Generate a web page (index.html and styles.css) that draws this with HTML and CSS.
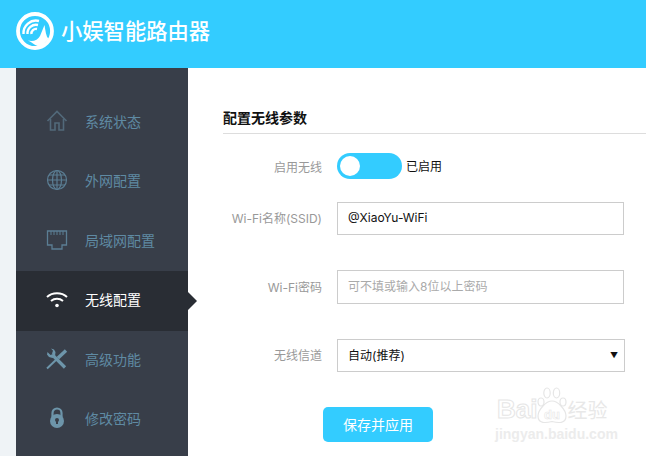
FILE: index.html
```html
<!DOCTYPE html>
<html lang="zh-CN">
<head>
    <meta charset="UTF-8">
    <title>小娱智能路由器</title>
    <link rel="stylesheet" href="styles.css">
</head>
<body>
    <header class="top">
        <svg class="logo" width="40" height="40" viewBox="0 0 40 40">
            <circle cx="20" cy="20" r="17" fill="none" stroke="#fff" stroke-width="3.8"/>
            <g fill="none" stroke="#fff" stroke-width="2.400">
                <path d="M8.500 23 A12.500 12.500 0 0 1 24 10"/>
                <path d="M12.500 23 A8.500 8.500 0 0 1 23 14"/>
                <path d="M16.500 23 A4.500 4.500 0 0 1 22 18"/>
            </g>
            <path d="M13 29.500 C18 31 23 29 25 25 L29.500 14 C30.500 20 31 25 33.500 28 L26 36 C20 35 17 31 13 29.500Z" fill="#fff"/>
        </svg>
        <span class="brand">小娱智能路由器</span>
    </header>

    <div class="wrap">
        <ul class="nav">
            <li>
                <svg width="24" height="24" viewBox="0 0 24 24" fill="none" stroke="#52697a" stroke-width="1.600">
                    <path d="M2.500 12 L12 2.500 L21.500 12"/>
                    <path d="M5.500 10 V21 H10 V14 H14 V21 H18.500 V10"/>
                </svg>
                <span>系统状态</span>
            </li>
            <li>
                <svg width="24" height="24" viewBox="0 0 24 24" fill="none" stroke="#5b7e94" stroke-width="1.200">
                    <circle cx="12" cy="12" r="9.500"/>
                    <ellipse cx="12" cy="12" rx="4.500" ry="9.500"/>
                    <path d="M12 2.500 V21.500 M2.500 12 H21.500 M4 7 H20 M4 17 H20"/>
                </svg>
                <span>外网配置</span>
            </li>
            <li>
                <svg width="24" height="24" viewBox="0 0 24 24" fill="none" stroke="#5b7e94" stroke-width="1.300">
                    <path d="M2.500 3 H21.500 V17 H17 V21 H7 V17 H2.500Z"/>
                    <path d="M6 3 V7 M9 3 V7 M12 3 V7 M15 3 V7 M18 3 V7" stroke-width="1"/>
                </svg>
                <span>局域网配置</span>
            </li>
            <li class="active">
                <svg width="24" height="24" viewBox="0 0 24 24" fill="none" stroke="#fff" stroke-width="2">
                    <path d="M2 10 C7.500 5 16.500 5 22 10"/>
                    <path d="M6 14 C9.500 11 14.500 11 18 14"/>
                    <circle cx="12" cy="18.500" r="1.800" fill="#fff" stroke="none"/>
                </svg>
                <span>无线配置</span>
            </li>
            <li>
                <svg width="24" height="24" viewBox="0 0 24 24" fill="none" stroke="#6d95aa">
                    <path d="M2 21.500 L13 11" stroke-width="2"/>
                    <path d="M13 11 L21 3.500" stroke-width="3.400"/>
                    <path d="M8.500 9 L20 20.500" stroke-width="3.200"/>
                    <path d="M2.500 5 L5.500 8 L8 7 L10 9.500 L7.500 11 L4 10 L2 7.500Z M6 1.500 L9 2.500 L10.500 5 L10 9.500 L7 6.500 L8 3.800Z" fill="#6d95aa" stroke="none"/>
                </svg>
                <span>高级功能</span>
            </li>
            <li>
                <svg width="24" height="24" viewBox="0 0 24 24">
                    <path d="M7.500 11 V7 A4.500 4.500 0 0 1 16.500 7 V11" fill="none" stroke="#6d95aa" stroke-width="2.200"/>
                    <circle cx="12" cy="15" r="7" fill="#6d95aa"/>
                    <circle cx="12" cy="14" r="2" fill="#383e49"/>
                    <path d="M11 14.500 H13 V18 H11Z" fill="#383e49"/>
                </svg>
                <span>修改密码</span>
            </li>
        </ul>

        <main class="main">
            <h2 class="title">配置无线参数</h2>

            <div class="row row-switch">
                <label>启用无线</label>
                <div class="switch"><i></i></div>
                <span class="state">已启用</span>
            </div>
            <div class="row row-ssid">
                <label>Wi-Fi名称(SSID)</label>
                <div class="field">@XiaoYu-WiFi</div>
            </div>
            <div class="row row-pwd">
                <label>Wi-Fi密码</label>
                <div class="field holder">可不填或输入8位以上密码</div>
            </div>
            <div class="row row-channel">
                <label>无线信道</label>
                <div class="field select">自动(推荐)<b>▼</b></div>
            </div>
            <div class="actions">
                <button class="save">保存并应用</button>
            </div>
        </main>
    </div>

    <div class="mark">
        <div class="mark-top">
            <span class="mark-bai">Bai</span>
            <svg width="30" height="37" viewBox="0 0 30 37" fill="none" stroke="#e6e6e6" stroke-width="1.200">
                <ellipse cx="4" cy="15" rx="3" ry="4"/>
                <ellipse cx="10" cy="6" rx="3.200" ry="5"/>
                <ellipse cx="19.500" cy="6" rx="3.200" ry="5"/>
                <ellipse cx="26" cy="15" rx="3" ry="4"/>
                <path d="M15 14 C9 14 1 23 1 29 C1 37 9 36 15 34.500 C21 36 29 37 29 29 C29 23 21 14 15 14Z"/>
                <text class="mark-du" x="15" y="32" text-anchor="middle">du</text>
            </svg>
            <span class="mark-cn">经验</span>
        </div>
        <div class="mark-url">jingyan.baidu.com</div>
    </div>
</body>
</html>
```

FILE: styles.css
```css
* {
    box-sizing: border-box;
}
html, body {
    margin: 0;
    height: 100%;
    overflow: hidden;
}
body {
    position: relative;
    background: #fff;
    font-family: "Inter", "Noto Sans CJK SC", sans-serif;
    font-size: 12px;
}
.top {
    height: 68px;
    background: #33ccff;
    display: flex;
    align-items: center;
    padding: 0 0 6px 15px;
}
.brand {
    margin-left: 6px;
    color: #fff;
    font-size: 21.3px;
    line-height: 28px;
    font-weight: 500;
}
.wrap {
    display: flex;
    height: 388px;
    background: #eff3f6;
    padding-left: 16px;
}
.nav {
    list-style: none;
    margin: 0;
    padding: 24px 0 0;
    width: 172px;
    flex: none;
    background: #383e49;
}
.nav li {
    position: relative;
    display: flex;
    align-items: center;
    height: 59.5px;
    padding: 0 0 2px 29px;
    color: #5f8aa3;
    font-size: 14px;
}
.nav li span {
    margin-left: 16px;
}
.nav li.active {
    height: 60px;
    margin-bottom: -0.5px;
    padding-bottom: 3px;
    background: #292d34;
    color: #fff;
}
.nav li.active:after {
    content: '';
    position: absolute;
    right: -9px;
    top: 50%;
    margin-top: -9px;
    border-left: 9px solid #292d34;
    border-top: 9px solid transparent;
    border-bottom: 9px solid transparent;
}
.main {
    flex: 1;
    background: #fff;
    padding: 40px 0 0 35px;
}
.title {
    margin: 0;
    height: 26px;
    line-height: 20px;
    font-size: 14px;
    font-weight: 700;
    color: #111;
    border-bottom: 1px solid #ddd;
}
.row {
    display: flex;
    align-items: center;
}
.row label {
    width: 99px;
    flex: none;
    text-align: right;
    color: #999;
    margin-right: 15px;
    padding-bottom: 2px;
    white-space: nowrap;
}
.row-switch label {
    padding-bottom: 0;
}
.row-switch {
    margin-top: 19px;
    height: 26px;
}
.row-ssid {
    margin-top: 23px;
}
.row-pwd {
    margin-top: 35px;
}
.row-channel {
    margin-top: 35px;
}
.switch {
    width: 65px;
    height: 26px;
    border-radius: 13px;
    background: #33ccff;
    padding: 3px;
}
.switch i {
    display: block;
    width: 20px;
    height: 20px;
    border-radius: 50%;
    background: #fff;
}
.state {
    margin-left: 4px;
    padding-bottom: 2px;
    color: #111;
}
.field {
    position: relative;
    width: 287px;
    height: 33px;
    line-height: 30px;
    padding-left: 10px;
    border: 1px solid #ccc;
    background: #fff;
    color: #111;
}
.holder {
    color: #aaa;
    height: 34px;
    line-height: 31px;
}
.select {
    width: 288px;
    line-height: 31px;
}
.select b {
    position: absolute;
    right: 6px;
    top: 0;
    font-size: 8px;
    font-weight: 400;
}
.actions {
    margin-top: 35px;
    padding-left: 100px;
}
.save {
    width: 110px;
    height: 35px;
    padding: 0 0 2px;
    border: 0;
    border-radius: 5px;
    background: #33ccff;
    color: #fff;
    font-family: inherit;
    font-size: 14px;
}
.mark {
    position: absolute;
    left: 495px;
    top: 387px;
    width: 115px;
    color: #fff;
}
.mark-top {
    display: flex;
    align-items: flex-end;
    height: 37px;
}
.mark-bai {
    font-family: "Liberation Sans", sans-serif;
    font-size: 26px;
    line-height: 30px;
    font-weight: 700;
    margin-left: 2px;
    -webkit-text-stroke: 1px #e6e6e6;
}
.mark-du {
    font-family: "Liberation Sans", sans-serif;
    font-size: 13px;
    font-weight: 700;
    fill: #fff;
    stroke: #e6e6e6;
    stroke-width: 0.6px;
}
.mark-cn {
    font-family: "Noto Sans CJK SC", sans-serif;
    font-size: 20px;
    line-height: 28px;
    color: #e8e8e8;
}
.mark-url {
    margin-top: 2px;
    font-family: "Liberation Sans", sans-serif;
    font-size: 14px;
    line-height: 16px;
    font-weight: 700;
    color: #ececec;
    white-space: nowrap;
}
```
